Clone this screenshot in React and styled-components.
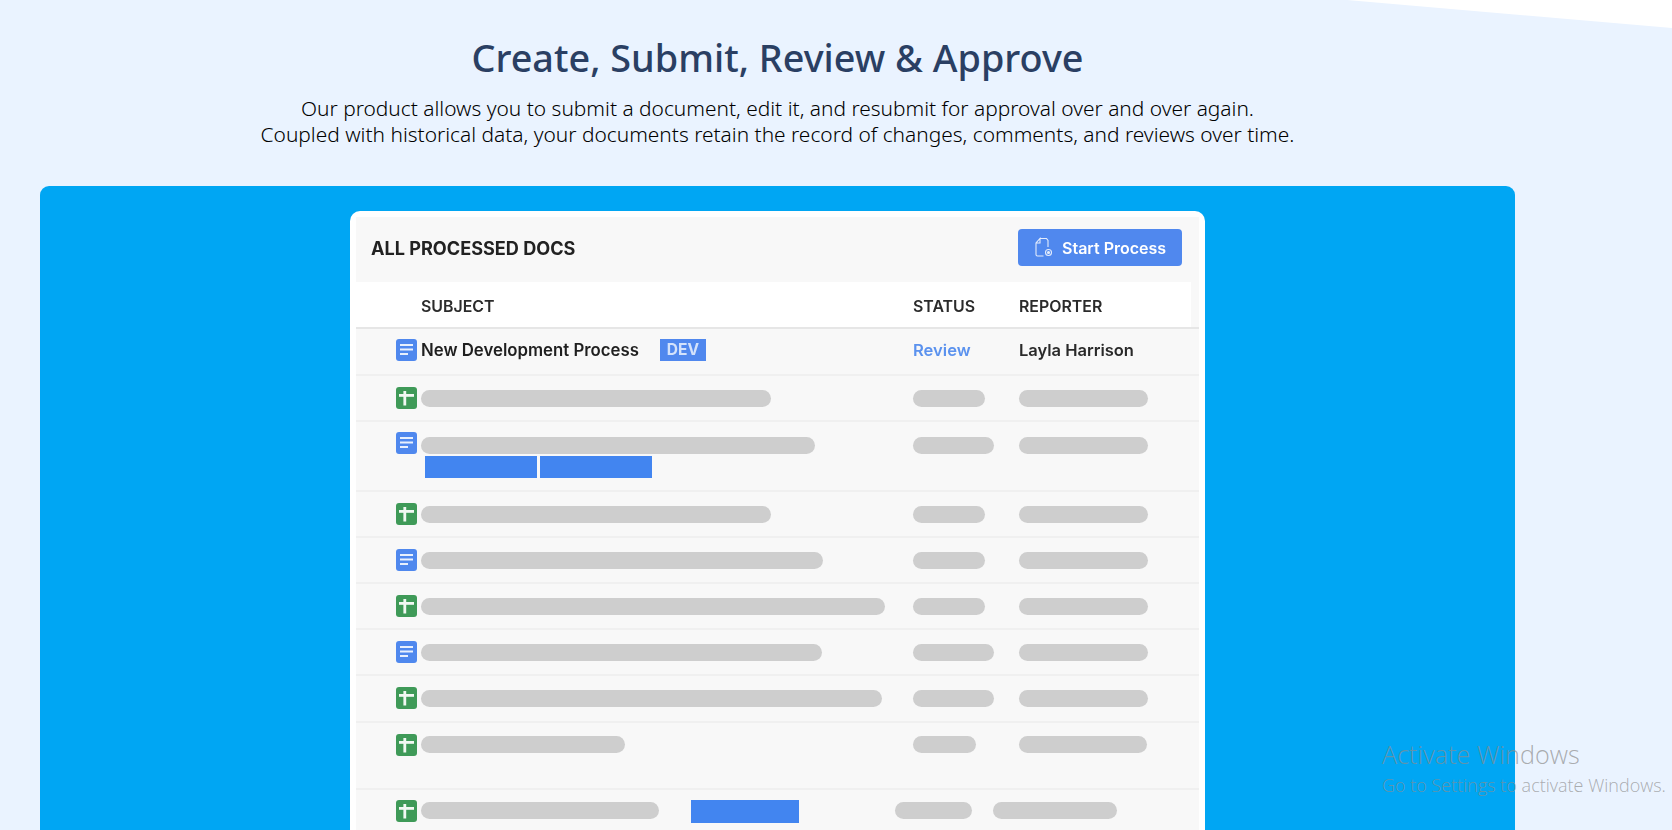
import React from 'react';
import styled, { createGlobalStyle } from 'styled-components';

const GlobalStyle = createGlobalStyle`
    html, body {
        margin: 0;
        padding: 0;
        background: #eaf3ff;
    }
    * {
        box-sizing: border-box;
    }
`;

const Page = styled.div`
    position: relative;
    width: 1672px;
    height: 830px;
    overflow: hidden;
    background: #eaf3ff;
    font-family: "Noto Sans", sans-serif;
`;

const Corner = styled.div`
    position: absolute;
    top: 0;
    right: 0;
    width: 325px;
    height: 28px;
    background: #ffffff;
    clip-path: polygon(0 0, 100% 0, 100% 100%);
`;

const Intro = styled.section`
    width: 1555px;
    height: 186px;
    padding-top: 34px;
    text-align: center;
`;

const Title = styled.h1`
    margin: 0 0 14px;
    font-size: 37.8px;
    line-height: 48px;
    font-weight: 500;
    color: #2a3f63;
`;

const Lead = styled.p`
    margin: 0;
    font-size: 20.9px;
    line-height: 25.5px;
    font-weight: 300;
    color: #000000;
`;

const Panel = styled.section`
    width: 1475px;
    height: 700px;
    margin-left: 40px;
    padding-top: 25px;
    background: #00a6f3;
    border-radius: 9px;
`;

const Card = styled.div`
    width: 855px;
    height: 680px;
    margin: 0 auto;
    padding: 6px 6px 0;
    background: #ffffff;
    border-radius: 10px;
`;

const Shot = styled.div`
    height: 100%;
    background: #f8f8f8;
    font-family: Inter, sans-serif;
    color: #222222;
    filter: blur(0.45px);
`;

const TopBar = styled.div`
    display: flex;
    align-items: center;
    justify-content: space-between;
    height: 65px;
    padding: 0 17px 3px 15px;
`;

const BarTitle = styled.h2`
    margin: 0;
    font-size: 18.1px;
    font-weight: 700;
    color: #222222;
`;

const StartButton = styled.button`
    display: flex;
    align-items: center;
    gap: 9px;
    width: 164px;
    height: 37px;
    margin-top: -1px;
    padding: 0 0 0 16px;
    border: none;
    border-radius: 4px;
    background: #5088ee;
    color: #ffffff;
    font-family: Inter, sans-serif;
    font-size: 16px;
    font-weight: 600;
`;

const TableHead = styled.div`
    display: grid;
    grid-template-columns: 65px 492px 106px 1fr;
    align-items: center;
    height: 47px;
    padding-top: 4px;
    border-bottom: 2px solid #e6e6e6;
    background: linear-gradient(to right, #ffffff 835px, #f8f8f8 835px);
    font-size: 15.9px;
    font-weight: 600;
    color: #2b2b2b;
`;

const HeadCell = styled.span`
    grid-column: ${(props) => props.$column};
`;

const Row = styled.div`
    display: grid;
    grid-template-columns: ${(props) => props.$columns || '25px 492px 106px 1fr'};
    align-content: start;
    height: ${(props) => props.$height}px;
    padding: ${(props) => props.$top ?? 11}px 0 0 40px;
    border-bottom: 2px solid #f0f0f0;
`;

const DocIcon = styled.svg`
    display: block;
    width: 21px;
    height: 22px;
`;

const Subject = styled.div`
    display: flex;
    flex-wrap: wrap;
    align-items: flex-start;
    padding-top: ${(props) => props.$offset ?? 3}px;
`;

const Pill = styled.div`
    width: ${(props) => props.$width}px;
    height: 17px;
    border-radius: 9px;
    background: #cecece;
    margin-top: ${(props) => props.$offset ?? 3}px;
`;

const TagRow = styled.div`
    display: flex;
    gap: 3px;
    width: 100%;
    margin: 2px 0 0 4px;
`;

const Tag = styled.div`
    width: ${(props) => props.$width}px;
    height: 22px;
    background: #4285f0;
`;

const FloatingTag = styled(Tag)`
    height: 23px;
    margin: -2px 0 0 32px;
`;

const DocName = styled.span`
    font-size: 16.8px;
    font-weight: 600;
    line-height: 22px;
    color: #1f1f1f;
`;

const DevBadge = styled.span`
    width: 46px;
    height: 22px;
    margin-left: 21px;
    background: #5088ee;
    color: #d3e2fb;
    font-size: 15.5px;
    font-weight: 700;
    line-height: 22px;
    text-align: center;
`;

const StatusText = styled.span`
    font-size: 16.6px;
    font-weight: 600;
    line-height: 22px;
    color: #5b92ee;
`;

const ReporterText = styled.span`
    font-size: 16.5px;
    font-weight: 600;
    line-height: 22px;
    color: #2a2a2a;
`;

const Watermark = styled.div`
    position: absolute;
    left: 1382px;
    top: 738px;
    font-family: "Open Sans", sans-serif;
    color: rgba(140, 140, 140, 0.7);
    pointer-events: none;
`;

const WatermarkTitle = styled.div`
    font-size: 25.2px;
    font-weight: 300;
    line-height: 33px;
`;

const WatermarkText = styled.div`
    margin-top: 3px;
    font-size: 18px;
    font-weight: 300;
    line-height: 22px;
    white-space: nowrap;
`;

function BlueDoc() {
    return (
        <DocIcon viewBox="0 0 21 22">
            <rect x="0" y="0" width="21" height="22" rx="3" fill="#4f88ee" />
            <rect x="4" y="5" width="13" height="2" fill="#e8f0fd" />
            <rect x="4" y="9.5" width="13" height="2" fill="#e8f0fd" />
            <rect x="4" y="14" width="8" height="2" fill="#e8f0fd" />
        </DocIcon>
    );
}

function GreenSheet() {
    return (
        <DocIcon viewBox="0 0 21 22">
            <rect x="0" y="0" width="21" height="22" rx="3" fill="#3f9a58" />
            <rect x="3" y="7" width="15" height="2.8" fill="#f2f8f3" />
            <rect x="7.4" y="4" width="2.8" height="14.5" fill="#f2f8f3" />
        </DocIcon>
    );
}

function ProcessIcon() {
    return (
        <svg width="19" height="21" viewBox="0 0 19 21" fill="none" stroke="#e3ecfc" strokeWidth="1.1">
            <path d="M6 1.5H12.5L14 3.5V10" />
            <path d="M9.5 19H3.5C2.5 19 2 18.5 2 17.5V6L6 1.5V6H2" />
            <circle cx="14.5" cy="15.5" r="3" />
            <circle cx="14.5" cy="15.5" r="1" fill="#e3ecfc" />
        </svg>
    );
}

const rows = [
    { kind: 'sheet', height: 46, subject: 350, status: 72, reporter: 129 },
    { kind: 'doc', height: 70, top: 10, subject: 394, status: 81, reporter: 129, offset: 5, tags: [112, 112] },
    { kind: 'sheet', height: 46, subject: 350, status: 72, reporter: 129 },
    { kind: 'doc', height: 46, subject: 402, status: 72, reporter: 129 },
    { kind: 'sheet', height: 46, subject: 464, status: 72, reporter: 129 },
    { kind: 'doc', height: 46, subject: 401, status: 81, reporter: 129 },
    { kind: 'sheet', height: 47, subject: 461, status: 81, reporter: 129 },
    { kind: 'sheet', height: 67, offset: 2, subject: 204, status: 63, reporter: 128 },
    {
        kind: 'sheet',
        height: 60,
        top: 10,
        offset: 2,
        subject: 238,
        status: 77,
        reporter: 124,
        floating: 108,
        columns: '25px 474px 98px 1fr',
    },
];

function DocRow({ row }) {
    return (
        <Row $height={row.height} $top={row.top} $columns={row.columns}>
            {row.kind === 'doc' ? <BlueDoc /> : <GreenSheet />}
            <Subject $offset={row.offset}>
                <Pill $width={row.subject} $offset={0} />
                {row.floating && <FloatingTag $width={row.floating} />}
                {row.tags && (
                    <TagRow>
                        {row.tags.map((width, index) => (
                            <Tag key={index} $width={width} />
                        ))}
                    </TagRow>
                )}
            </Subject>
            <Pill $width={row.status} $offset={row.offset} />
            <Pill $width={row.reporter} $offset={row.offset} />
        </Row>
    );
}

function App() {
    return (
        <Page>
            <GlobalStyle />
            <Corner />
            <Intro>
                <Title>Create, Submit, Review &amp; Approve</Title>
                <Lead>Our product allows you to submit a document, edit it, and resubmit for approval over and over again.</Lead>
                <Lead>Coupled with historical data, your documents retain the record of changes, comments, and reviews over time.</Lead>
            </Intro>
            <Panel>
                <Card>
                    <Shot>
                        <TopBar>
                            <BarTitle>ALL PROCESSED DOCS</BarTitle>
                            <StartButton>
                                <ProcessIcon />
                                Start Process
                            </StartButton>
                        </TopBar>
                        <TableHead>
                            <HeadCell $column={2}>SUBJECT</HeadCell>
                            <HeadCell $column={3}>STATUS</HeadCell>
                            <HeadCell $column={4}>REPORTER</HeadCell>
                        </TableHead>
                        <Row $height={47} $top={10}>
                            <BlueDoc />
                            <Subject $offset={0}>
                                <DocName>New Development Process</DocName>
                                <DevBadge>DEV</DevBadge>
                            </Subject>
                            <StatusText>Review</StatusText>
                            <ReporterText>Layla Harrison</ReporterText>
                        </Row>
                        {rows.map((row, index) => (
                            <DocRow key={index} row={row} />
                        ))}
                    </Shot>
                </Card>
            </Panel>
            <Watermark>
                <WatermarkTitle>Activate Windows</WatermarkTitle>
                <WatermarkText>Go to Settings to activate Windows.</WatermarkText>
            </Watermark>
        </Page>
    );
}

export default App;
